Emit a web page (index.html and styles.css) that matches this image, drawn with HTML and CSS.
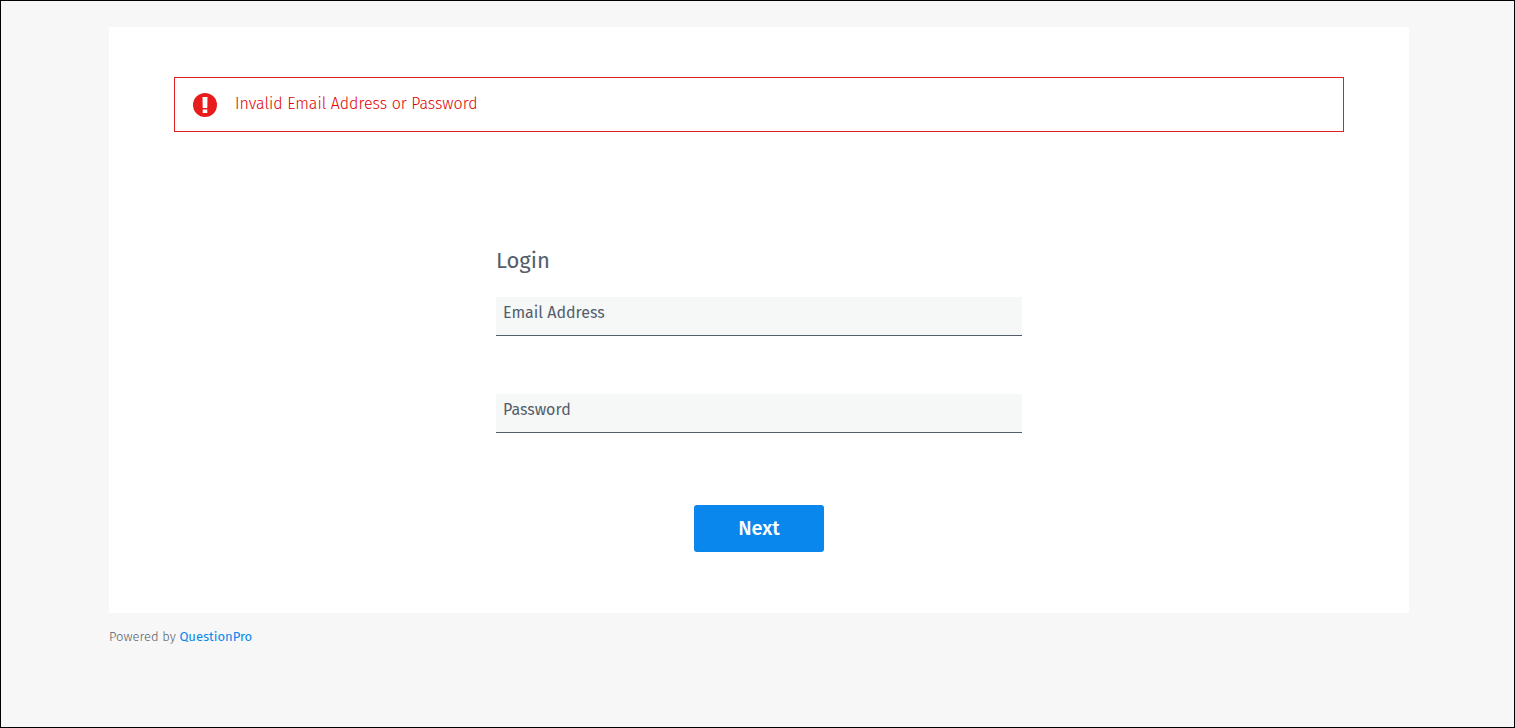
FILE: index.html
```
<!DOCTYPE html>
<html lang="en">
<head>
    <meta charset="UTF-8">
    <meta name="viewport" content="width=device-width, initial-scale=1.0">
    <title>Login</title>

    <link rel="stylesheet" href="styles.css">
</head>
<body>
    <div class="container">
        <main class="panel">
            <div class="alert" role="alert">
                <svg class="alert-icon" xmlns="http://www.w3.org/2000/svg" viewBox="0 0 24 24" aria-hidden="true">
                    <circle cx="12" cy="12" r="12" fill="#e81c1c"/>
                    <path d="M9.5 4h5l-.2 11H9.7zM9.7 16.4h4.6V20H9.7z" fill="#fff"/>
                </svg>
                <span>Invalid Email Address or Password</span>
            </div>

            <form class="login-form">
                <h1>Login</h1>

                <div class="field">
                    <input type="email" id="email" name="email">
                    <label for="email">Email Address</label>
                </div>

                <div class="field">
                    <input type="password" id="password" name="password">
                    <label for="password">Password</label>
                </div>

                <button type="button" class="button">Next</button>
            </form>
        </main>

        <footer class="footer">Powered by <a href="#">QuestionPro</a></footer>
    </div>
</body>
</html>
```

FILE: styles.css
```
* {
    box-sizing: border-box;
}

body {
    margin: 0;
    min-height: 100vh;
    padding: 26px 0 0 3px;
    border: 1px solid #000;
    background: #f7f7f7;
    color: #545e6b;
    font-family: "Fira Sans", Roboto, "Open Sans", sans-serif;
    font-size: 16px;
    line-height: 20px;
}

.container {
    width: 92%;
    max-width: 1300px;
    margin: 0 auto;
}

.panel {
    padding: 50px 5% 61px;
    background: #fff;
}

.alert {
    display: flex;
    align-items: center;
    gap: 18px;
    padding: 15px 18px 14px;
    border: 1px solid #e02020;
    color: #e00000;
    font-weight: 300;
}

.alert span {
    padding-bottom: 2px;
}

.alert-icon {
    flex: none;
    width: 24px;
    height: 24px;
}

.login-form {
    max-width: 526px;
    margin: 114px auto 0;
}

.login-form h1 {
    margin: 0 0 21px;
    font-size: 22px;
    font-weight: 400;
    line-height: 30px;
}

.field {
    position: relative;
    margin-bottom: 58px;
}

.field input {
    display: block;
    width: 100%;
    height: 39px;
    padding: 6px 7px;
    border: 0;
    border-bottom: 1px solid #545e6b;
    background: #f5f8f7;
    color: inherit;
    font: inherit;
}

.field label {
    position: absolute;
    top: 6px;
    left: 7px;
    cursor: text;
}

.button {
    display: block;
    width: 130px;
    height: 47px;
    margin: 72px auto 0;
    padding: 0 0 2px;
    border: 0;
    border-radius: 3px;
    background: #0a87ec;
    color: #fff;
    font-family: inherit;
    font-size: 20px;
    font-weight: 500;
    cursor: pointer;
}

.footer {
    padding: 14px 0;
    color: #545e6b;
    font-size: 13px;
    font-weight: 300;
}

.footer a {
    color: #0a87ec;
    font-weight: 400;
    text-decoration: none;
}
```
